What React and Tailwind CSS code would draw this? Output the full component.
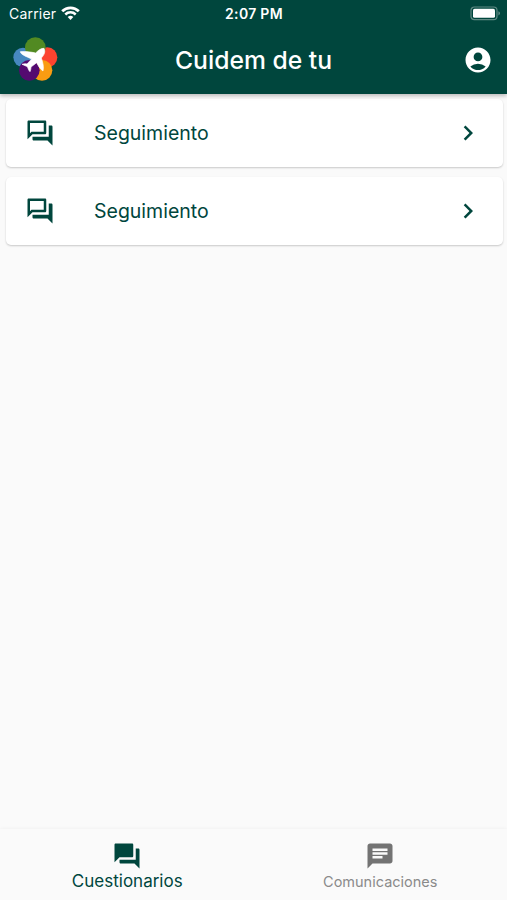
import {
  MdAccountCircle,
  MdChat,
  MdChevronRight,
  MdOutlineQuestionAnswer,
  MdQuestionAnswer,
} from "react-icons/md";

const surveys = [
  { id: 1, title: "Seguimiento" },
  { id: 2, title: "Seguimiento" },
];

function WifiIcon() {
  return (
    <svg className="h-[15px] w-[19px]" viewBox="0 0 19 15" fill="none" stroke="white">
      <path d="M1.2 5.2a11.8 11.8 0 0 1 16.6 0" strokeWidth="2.8" />
      <path d="M4.3 8.5a7.4 7.4 0 0 1 10.4 0" strokeWidth="2.5" />
      <path d="M9.5 14 6.7 11.1a4 4 0 0 1 5.6 0Z" fill="white" stroke="none" />
    </svg>
  );
}

function BatteryIcon() {
  return (
    <svg className="h-[15px] w-[31px]" viewBox="0 0 31 15">
      <rect x="1" y="1" width="26" height="12.6" rx="3.4" fill="none" stroke="#5f8a84" strokeWidth="1.2" />
      <rect x="3" y="2.8" width="22" height="9" rx="1.6" fill="white" />
      <path d="M28.4 5.2v4.2q1.6-.6 1.6-2.1t-1.6-2.1Z" fill="#5f8a84" />
    </svg>
  );
}

function Logo() {
  return (
    <svg className="size-[54px]" viewBox="0 0 162 162">
      <circle cx="45" cy="73" r="29" fill="#4688c0" />
      <circle cx="118" cy="73" r="30" fill="#fb432f" />
      <circle cx="102" cy="112" r="31" fill="#f99c12" />
      <circle cx="64" cy="112" r="31" fill="#540a70" />
      <circle cx="82" cy="44" r="31" fill="#528a22" />
      <path
        d="M108 46c-10 0-16 5-25 14-14-3-28-5-46-4 1 8 14 13 34 22L57 93c-5-1-10-1-15 1 7 3 13 5 17 9 2 6 3 9 7 13 2-5 3-9 3-14l17-13c6 11 9 18 19 25 3-12 0-24-5-39 9-10 13-18 8-29Z"
        fill="white"
        stroke="white"
        strokeWidth="2"
      />
    </svg>
  );
}

function StatusBar() {
  return (
    <div className="grid h-[27px] grid-cols-3 items-center pl-[9px] pr-[6px] text-[14px] leading-none">
      <div className="flex items-center gap-[5px]">
        <span className="tracking-[0.2px]">Carrier</span>
        <WifiIcon />
      </div>
      <span className="pr-[2px] pt-px text-center text-[14px] font-semibold tracking-[0.3px]">2:07 PM</span>
      <div className="flex justify-end">
        <BatteryIcon />
      </div>
    </div>
  );
}

function Header() {
  return (
    <header className="relative h-[94px] bg-[#00463d] text-white shadow-[0_2px_4px_rgba(0,0,0,0.25)]">
      <StatusBar />
      <div className="grid h-[66px] grid-cols-[1fr_auto_1fr] items-center pl-2 pr-[14px]">
        <Logo />
        <h1 className="pl-[6px] pt-px text-[24.7px] font-medium">Cuidem de tu</h1>
        <MdAccountCircle className="size-[30px] justify-self-end" />
      </div>
    </header>
  );
}

function SurveyCard({ title }) {
  return (
    <button className="flex h-[68px] items-center rounded-[5px] bg-white pl-[19px] pr-[20px] text-[#00463d] shadow-[0_1px_2px_rgba(0,0,0,0.2)]">
      <MdOutlineQuestionAnswer className="size-[30px]" />
      <span className="ml-[39px] flex-1 pt-0.5 text-left text-[19.5px]">{title}</span>
      <MdChevronRight className="size-[30px]" />
    </button>
  );
}

function BottomNav() {
  return (
    <nav className="grid h-[71px] grid-cols-2 bg-[#fafafa] shadow-[0_-1px_3px_rgba(0,0,0,0.03)]">
      <div className="flex flex-col items-center pt-[12px] pl-px text-[#00463d]">
        <MdQuestionAnswer className="size-[30px]" />
        <span className="text-[17px] leading-[20px]">Cuestionarios</span>
      </div>
      <div className="flex flex-col items-center pt-[12px] text-[#737373]">
        <MdChat className="size-[30px]" />
        <span className="text-[14.5px] leading-[22px] text-[#8a8a8a]">Comunicaciones</span>
      </div>
    </nav>
  );
}

function App() {
  return (
    <div className="flex h-[900px] w-[507px] flex-col overflow-hidden bg-[#fafafa] font-['Inter',sans-serif]">
      <Header />
      <main className="flex flex-1 flex-col gap-[10px] pl-[6px] pr-[4px] pt-[5px]">
        {surveys.map(survey => (
          <SurveyCard key={survey.id} title={survey.title} />
        ))}
      </main>
      <BottomNav />
    </div>
  );
}

export default App;
